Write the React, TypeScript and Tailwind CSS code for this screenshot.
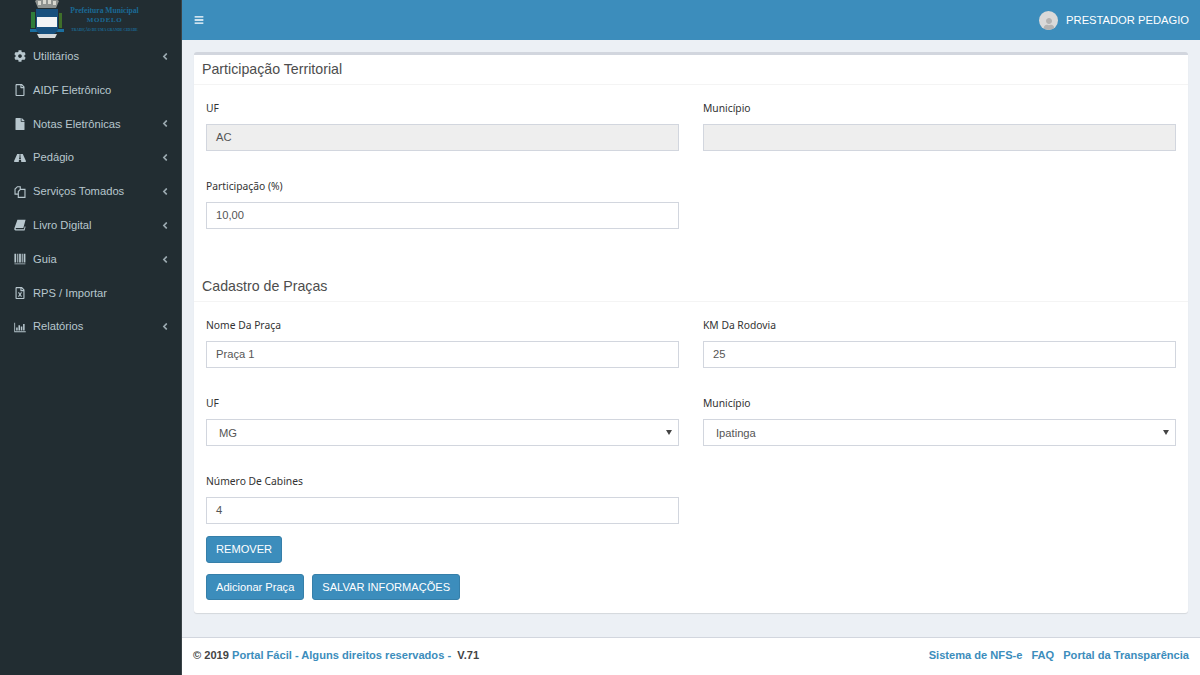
import type { ReactNode } from "react";
import { FaBars, FaAngleLeft, FaCog, FaFile, FaRegFile, FaRoad, FaRegFileExcel, FaUser } from "react-icons/fa";

const FilesIcon = ({ className }: { className?: string }) => (
  <svg viewBox="0 0 14 14" className={className} fill="none" stroke="currentColor" strokeWidth="1.3">
    <path d="M5 9.5H1.2V3.5L4 .8h3.3v3" />
    <path d="M5 13.3V6.5L7.5 4h5.3v9.3z" />
  </svg>
);

const BookIcon = ({ className }: { className?: string }) => (
  <svg viewBox="0 0 14 14" className={className} fill="currentColor">
    <path d="M4 1h9.5l-2.6 9.5H2.6c-.8 0-1 1.5 0 1.5h9l1-3.6.9.5-1.2 4.6H2C.6 13.5 0 12 .5 10.5z" />
  </svg>
);

const BarsIcon = ({ className }: { className?: string }) => (
  <svg viewBox="0 0 14 14" className={className} fill="currentColor">
    <path d="M.5 1h2v10h-2zM3.8 1h1.2v10H3.8zM6 1h2v10H6zM9 1h1.2v10H9zM11.3 1h2v10h-2zM.5 12.3h12.8v.9H.5z" />
  </svg>
);

const ChartIcon = ({ className }: { className?: string }) => (
  <svg viewBox="0 0 14 14" className={className} fill="currentColor">
    <path d="M.3 2h1v10h12.4v1H.3zM2.5 7.5h1.8V11H2.5zM5.2 5h1.8v6H5.2zM7.9 6.5h1.8V11H7.9zM10.6 3.5h1.8V11h-1.8z" />
  </svg>
);

const menu = [
  { label: "Utilitários", icon: FaCog, arrow: true },
  { label: "AIDF Eletrônico", icon: FaRegFile, arrow: false },
  { label: "Notas Eletrônicas", icon: FaFile, arrow: true },
  { label: "Pedágio", icon: FaRoad, arrow: true },
  { label: "Serviços Tomados", icon: FilesIcon, arrow: true },
  { label: "Livro Digital", icon: BookIcon, arrow: true },
  { label: "Guia", icon: BarsIcon, arrow: true },
  { label: "RPS / Importar", icon: FaRegFileExcel, arrow: false },
  { label: "Relatórios", icon: ChartIcon, arrow: true },
];

const Logo = () => (
  <div className="h-[39.5px] flex items-start pl-[30px] overflow-hidden">
    <svg width="34" height="39" viewBox="0 0 34 39" className="shrink-0">
      <path d="M5 1 L8 -1 L26 -1 L29 1 L26 8 L8 8 Z" fill="#8f9390" />
      <path d="M8 1h3v4H8zM13 0h3v4h-3zM18 0h3v4h-3zM23 1h3v4h-3z" fill="#d8d8d0" />
      <path d="M1 12h4v16H1z" fill="#2f7d3a" />
      <path d="M29 13h3v15h-3z" fill="#3f6f2a" />
      <path d="M0 29h34v3H0z" fill="#1b6fa0" />
      <path d="M6 9h22v20q0 5 -11 7q-11 -2 -11 -7z" fill="#17507e" />
      <rect x="7" y="17" width="20" height="10" fill="#f2f4f6" />
      <path d="M7 34h20l-2 4H9z" fill="#d6dadc" />
    </svg>
    <div className="ml-[6px] w-[69px] text-center text-[#1a6a96] font-['Liberation_Serif',serif] font-bold leading-[8px] pt-[7px]">
      <div className="text-[7.6px] whitespace-nowrap">Prefeitura Municipal</div>
      <div className="text-[7px] mt-[1px] tracking-[0.6px]">MODELO</div>
      <div className="text-[3.6px] mt-[2px] whitespace-nowrap">TRADIÇÃO DE UMA GRANDE CIDADE</div>
    </div>
  </div>
);

const Sidebar = () => (
  <aside className="w-[182px] shrink-0 bg-[#222d32] border-r border-[#3a4347]">
    <Logo />
    <nav>
      {menu.map((m) => {
        const Icon = m.icon;
        return (
          <div key={m.label} className="h-[33.8px] flex items-center pl-[14px] pr-[12px] text-[#b8c7ce] text-[11.2px]">
            <Icon className="w-[12px] h-[12px] shrink-0" />
            <span className="ml-[7px] flex-1 whitespace-nowrap">{m.label}</span>
            {m.arrow && <FaAngleLeft className="w-[8px] h-[11px] opacity-80" />}
          </div>
        );
      })}
    </nav>
  </aside>
);

const Field = ({ label, children }: { label: string; children: ReactNode }) => (
  <div className="h-[78px]">
    <label className="block h-[32px] pt-[9px] font-['Noto_Sans',sans-serif] text-[10.3px] leading-[15px] font-normal text-[#333]">{label}</label>
    {children}
  </div>
);

const Input = ({ value, disabled }: { value: string; disabled?: boolean }) => (
  <div className={`h-[27px] border border-[#d2d6de] px-[9px] text-[11.2px] leading-[25px] text-[#555] ${disabled ? "bg-[#eeeeee]" : "bg-white"}`}>{value}</div>
);

const Select = ({ value }: { value: string }) => (
  <div className="h-[27px] border border-[#d2d6de] pl-[12px] pr-[6px] text-[11.2px] leading-[27px] text-[#555] bg-white flex items-center justify-between">
    <span className="pt-[1px]">{value}</span>
    <span className="w-0 h-0 border-l-[3px] border-r-[3px] border-t-[5px] border-l-transparent border-r-transparent border-t-[#444]" />
  </div>
);

const Btn = ({ children, tall }: { children: ReactNode; tall?: boolean }) => (
  <button className={`${tall ? "h-[27px]" : "h-[26px]"} px-[9px] bg-[#3c8dbc] border border-[#367fa9] rounded-[3px] text-white text-[11.1px] whitespace-nowrap`}>{children}</button>
);

const Title = ({ children }: { children: ReactNode }) => (
  <h3 className="h-[30px] px-[8px] pt-[4px] text-[14.2px] leading-[20px] text-[#4d4d4d] border-b border-[#f4f4f4]">{children}</h3>
);

export default function App() {
  return (
    <div className="flex w-[1200px] h-[675px] overflow-hidden font-['Liberation_Sans',Arial,sans-serif] bg-[#ecf0f5]">
      <Sidebar />
      <div className="flex-1 flex flex-col min-w-0">
        <header className="h-[40px] bg-[#3c8dbc] flex items-center justify-between pl-[12px] pr-[11px] text-white">
          <FaBars className="w-[10px] h-[10px]" />
          <div className="flex items-center gap-[8px] text-[11.2px]">
            <span className="w-[19px] h-[19px] rounded-full bg-[#d9d9d9] flex items-end justify-center overflow-hidden">
              <FaUser className="w-[12px] h-[12px] text-[#b3b3b3]" />
            </span>
            PRESTADOR PEDAGIO
          </div>
        </header>
        <main className="flex-1 px-[12px] pt-[12px]">
          <section className="h-[561px] bg-white border-t-[3px] border-[#d2d6de] rounded-[3px] shadow-[0_1px_1px_rgba(0,0,0,0.1)]">
            <Title>Participação Territorial</Title>
            <div className="px-[12px] pt-[7px]">
              <div className="grid grid-cols-2 gap-x-[24px]">
                <Field label="UF"><Input value="AC" disabled /></Field>
                <Field label="Município"><Input value="" disabled /></Field>
                <Field label="Participação (%)"><Input value="10,00" /></Field>
              </div>
            </div>
            <div className="mt-[24px]"><Title>Cadastro de Praças</Title></div>
            <div className="px-[12px] pt-[7px]">
              <div className="grid grid-cols-2 gap-x-[24px]">
                <Field label="Nome Da Praça"><Input value="Praça 1" /></Field>
                <Field label="KM Da Rodovia"><Input value="25" /></Field>
                <Field label="UF"><Select value="MG" /></Field>
                <Field label="Município"><Select value="Ipatinga" /></Field>
                <Field label="Número De Cabines"><Input value="4" /></Field>
              </div>
              <div className="mt-[-7px]"><Btn tall>REMOVER</Btn></div>
              <div className="mt-[11px] flex gap-[8px]">
                <Btn>Adicionar Praça</Btn>
                <Btn>SALVAR INFORMAÇÕES</Btn>
              </div>
            </div>
          </section>
        </main>
        <footer className="h-[38px] bg-white border-t border-[#d2d6de] flex items-center justify-between pl-[11px] pr-[11px] pb-[2px] text-[11.1px] font-bold text-[#444]">
          <div>
            © 2019 <span className="text-[#3c8dbc]">Portal Fácil - Alguns direitos reservados - </span> &nbsp;V.71
          </div>
          <div className="flex gap-[9px] text-[#3c8dbc]">
            <span>Sistema de NFS-e</span>
            <span>FAQ</span>
            <span>Portal da Transparência</span>
          </div>
        </footer>
      </div>
    </div>
  );
}
